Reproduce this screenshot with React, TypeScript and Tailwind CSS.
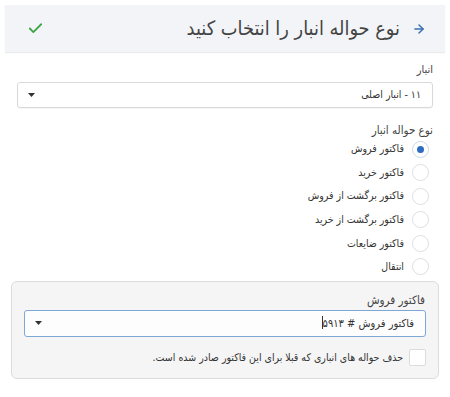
import { Check, ArrowRight } from "lucide-react";

const types = [
  "فاکتور فروش",
  "فاکتور خرید",
  "فاکتور برگشت از فروش",
  "فاکتور برگشت از خرید",
  "فاکتور ضایعات",
  "انتقال",
];

function Caret() {
  return (
    <svg width="7" height="4" viewBox="0 0 7 4" className="shrink-0">
      <path d="M0 0h7L3.5 4z" fill="#333" />
    </svg>
  );
}

export default function App() {
  const font = { fontFamily: '"DejaVu Sans Condensed", "DejaVu Sans", sans-serif' };
  return (
    <div dir="rtl" className="w-[450px] bg-white pt-[5px] text-[#333]" style={font}>
      <div className="mx-[5px] flex h-[47px] items-center bg-[#f3f4f8] pr-[19px] pl-[22px] shadow-[0_1px_1px_rgba(0,0,0,0.08)]">
        <ArrowRight className="h-[14px] w-[14px] text-[#3a6fb0]" strokeWidth={2.5} />
        <h1 className="mr-[12px] text-[19.8px] leading-[28px] font-extralight text-[#444]">
          نوع حواله انبار را انتخاب کنید
        </h1>
        <Check className="mr-auto h-[17px] w-[17px] text-[#3aa544]" strokeWidth={2.5} />
      </div>

      <div className="px-[17px] pt-[11px]">
        <label className="block text-[11px] leading-[14px] text-[#444]">انبار</label>
        <div className="mt-[5px] flex h-[26px] items-center justify-between rounded-[3px] border border-[#d9d9d9] pr-[11px] pl-[10px] shadow-[0_1px_1px_rgba(0,0,0,0.04)]">
          <span className="text-[10.5px]">۱۱ - انبار اصلی</span>
          <Caret />
        </div>

        <div className="mt-[15px] text-[11.5px] leading-[14px] text-[#444]">نوع حواله انبار</div>
        <div className="mt-[3px] flex flex-col gap-[5.6px]">
          {types.map((t, i) => (
            <div key={t} className="flex h-[18px] items-center gap-[8px] pr-[4px]">
              <span
                className={
                  i === 0
                    ? "flex h-[17px] w-[17px] items-center justify-center rounded-full border border-[#cfd8e6] bg-white"
                    : "h-[17px] w-[17px] rounded-full border border-[#dedede] bg-white"
                }
              >
                {i === 0 && <span className="h-[7px] w-[7px] rounded-full bg-[#2d6cc0]" />}
              </span>
              <span className="text-[10.5px]">{t}</span>
            </div>
          ))}
        </div>
      </div>

      <div className="mx-[11px] mt-[5px] rounded-[6px] border border-[#dcdcdc] bg-[#f5f5f5] px-[12px] pt-[11px] pb-[12px]">
        <label className="block pr-[1px] text-[11.5px] leading-[14px] text-[#444]">فاکتور فروش</label>
        <div className="mt-[3px] flex h-[27px] items-center justify-between rounded-[3px] border border-[#7fa7d6] bg-[#fdfdfe] pr-[11px] pl-[10px]">
          <span className="text-[11px]">
            فاکتور فروش # ۵۹۱۳<span className="inline-block h-[13px] w-px translate-y-[2px] bg-[#333]" />
          </span>
          <Caret />
        </div>
        <div className="mt-[12px] flex items-center gap-[6px]">
          <span className="h-[17px] w-[17px] rounded-[2px] border border-[#dcdcdc] bg-white" />
          <span className="text-[10.5px]">حذف حواله های انباری که قبلا برای این فاکتور صادر شده است.</span>
        </div>
      </div>
      <div className="h-[19px]" />
    </div>
  );
}
